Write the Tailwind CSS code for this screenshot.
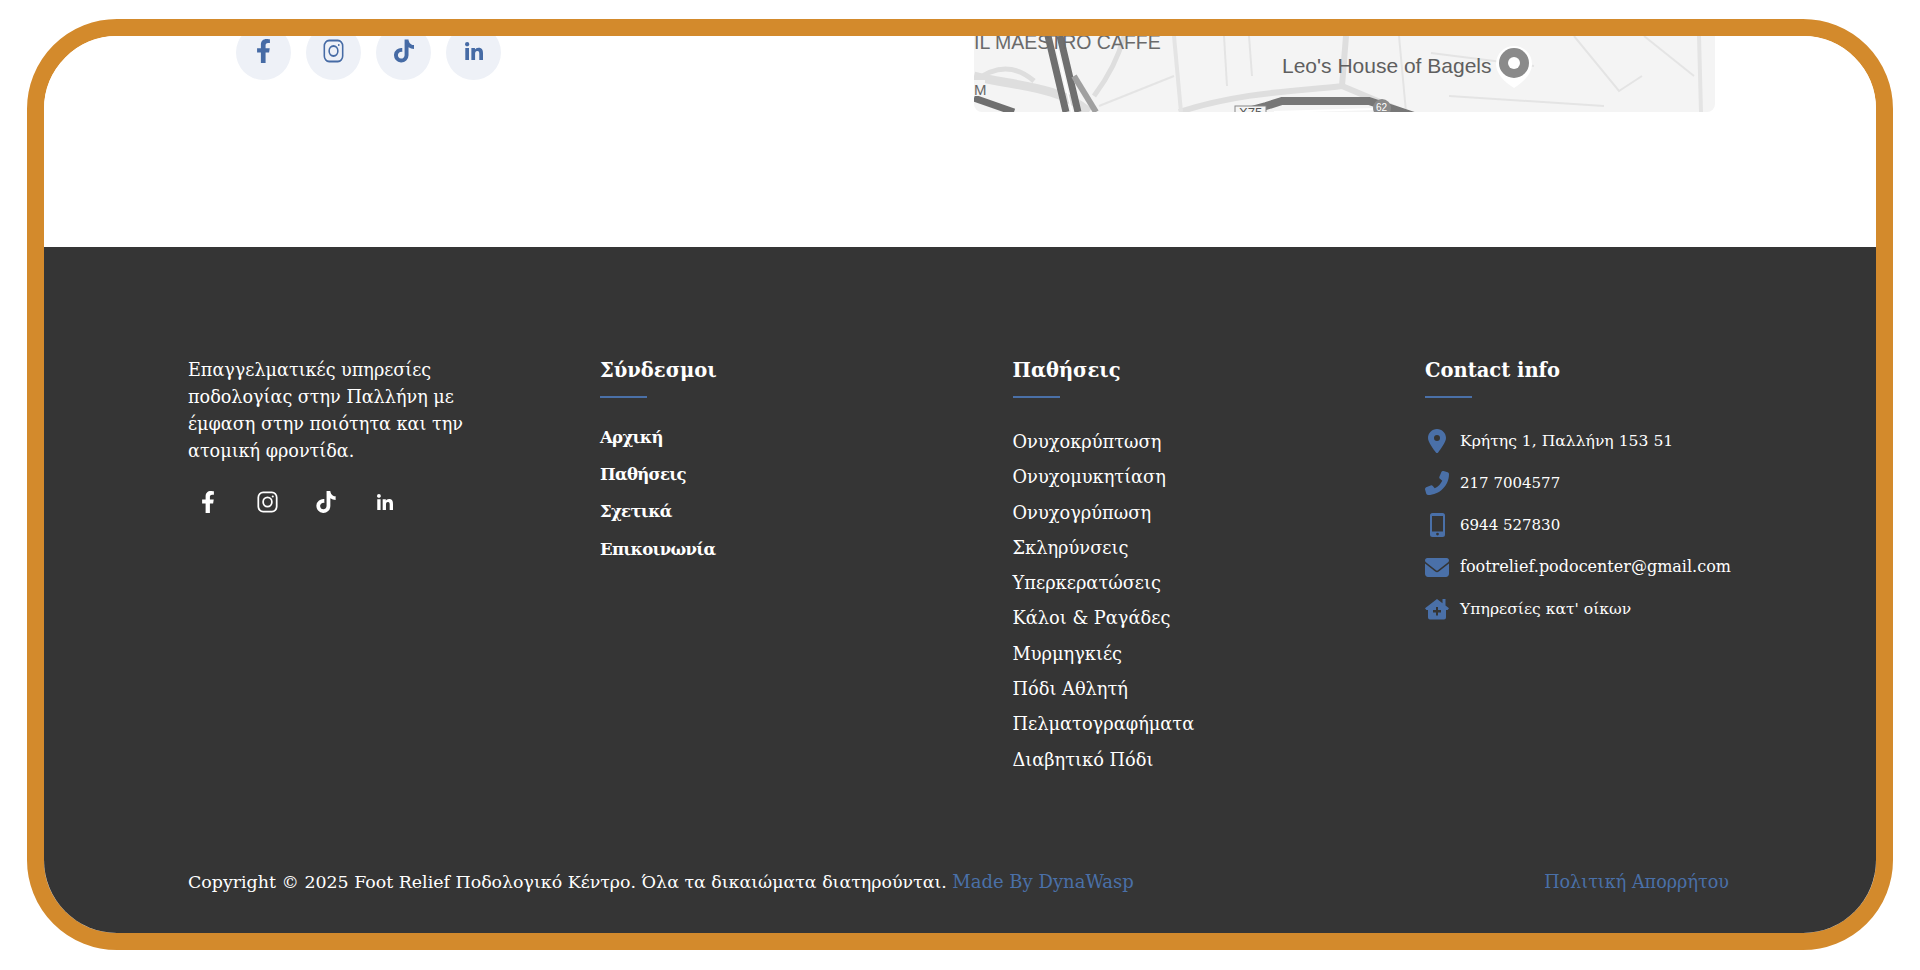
<!DOCTYPE html>
<html lang="el">
<head>
    <meta charset="UTF-8">
    <meta name="viewport" content="width=device-width, initial-scale=1.0">
    <title>Foot Relief</title>
    <script src="https://cdn.jsdelivr.net/npm/@tailwindcss/browser@4"></script>
</head>
<body class="bg-white h-[970px] overflow-hidden pt-[19px] px-[27px] font-['DejaVu_Serif',serif]">
    <div class="h-[931px] border-[17px] border-[#d38a2c] rounded-[90px] overflow-hidden flex flex-col">
        <!-- top section -->
        <div class="h-[211px] shrink-0 bg-white flex justify-between items-start pl-[192px] pr-[161px]">
            <div class="flex gap-[15px] -mt-[11px] text-[#466ba5]">
                <a class="w-[55px] h-[55px] pb-[3px] rounded-full bg-[#eef1f7] flex items-center justify-center">
                    <svg class="h-[24px] w-[15px]" viewBox="0 0 320 512" fill="currentColor"><path d="M279.14 288l14.22-92.66h-88.91v-60.13c0-25.35 12.42-50.06 52.24-50.06h40.42V6.26S260.43 0 225.36 0c-73.22 0-121.08 44.38-121.08 124.72v70.62H22.89V288h81.39v224h100.17V288z"/></svg>
                </a>
                <a class="w-[55px] h-[55px] pb-[3px] rounded-full bg-[#eef1f7] flex items-center justify-center">
                    <svg class="w-[21px] h-[24px]" viewBox="0 0 24 24" fill="none" stroke="currentColor" stroke-width="1.8" preserveAspectRatio="none"><rect x="1.5" y="1.5" width="21" height="21" rx="5.5"/><circle cx="12" cy="12" r="5"/><circle cx="18" cy="6" r="1" fill="currentColor" stroke="none"/></svg>
                </a>
                <a class="w-[55px] h-[55px] pb-[3px] rounded-full bg-[#eef1f7] flex items-center justify-center">
                    <svg class="w-[20px] h-[24px]" viewBox="0 0 448 512" fill="currentColor"><path d="M448,209.91a210.06,210.06,0,0,1-122.77-39.25V349.38A162.55,162.55,0,1,1,185,188.31V278.2a74.62,74.62,0,1,0,52.23,71.18V0l88,0a121.18,121.18,0,0,0,1.86,22.17h0A122.18,122.18,0,0,0,381,102.39a121.43,121.43,0,0,0,67,20.14Z"/></svg>
                </a>
                <a class="w-[55px] h-[55px] pb-[4px] rounded-full bg-[#eef1f7] flex items-center justify-center">
                    <svg class="w-[18px] h-[18px]" viewBox="0 0 448 448" fill="currentColor"><path d="M100.28 448H7.4V148.9h92.88zM53.79 108.1C24.09 108.1 0 83.5 0 53.8a53.79 53.79 0 0 1 107.58 0c0 29.7-24.1 54.3-53.79 54.3zM447.9 448h-92.68V302.4c0-34.7-.7-79.2-48.29-79.2-48.29 0-55.69 37.7-55.69 76.7V448h-92.78V148.9h89.08v40.8h1.3c12.4-23.5 42.69-48.3 87.88-48.3 94 0 111.28 61.9 111.28 142.3V448z"/></svg>
                </a>
            </div>
            <!-- map -->
            <div class="w-[741px] h-[76px] rounded-b-lg overflow-hidden bg-[#f4f4f4]">
                <svg class="w-full h-full" viewBox="0 0 741 76" font-family="'Liberation Sans',sans-serif">
                    <g fill="none" stroke="#dedede" stroke-width="5">
                        <path d="M0 46 C25 26 45 32 60 45"/>
                        <path d="M0 40 C40 50 85 50 115 76" stroke-width="9"/>
                        <path d="M120 60 C135 40 145 20 150 0"/>
                        <path d="M205 76 C270 55 330 55 368 50 L372 0" stroke-width="6"/>
                        <path d="M368 50 L430 76" stroke-width="6"/>
                    </g>
                    <g fill="none" stroke="#e4e4e4" stroke-width="2">
                        <path d="M200 0 L207 76" stroke-width="4"/>
                        <path d="M250 0 L253 50"/>
                        <path d="M275 0 L278 40"/>
                        <path d="M425 0 L432 76"/>
                        <path d="M457 17 L560 30"/>
                        <path d="M600 0 L645 55 L668 40"/>
                        <path d="M725 0 L727 76" stroke-width="4"/>
                        <path d="M670 0 L720 40"/>
                        <path d="M475 60 L630 70"/>
                        <path d="M200 40 L125 70"/>
                    </g>
                    <path d="M74 0 L92 76 M86 0 L104 76" stroke="#6f6f6f" stroke-width="7" fill="none"/>
                    <path d="M80 0 L98 76" stroke="#fff" stroke-width="1.5" fill="none"/>
                    <path d="M100 40 L122 76" stroke="#a0a0a0" stroke-width="6" fill="none"/>
                    <path d="M0 62 L40 76" stroke="#6f6f6f" stroke-width="7" fill="none"/>
                    <path d="M270 76 L292 70 L308 65 L395 65 L440 80" stroke="#777" stroke-width="8" fill="none"/>
                    <path d="M300 76 L400 73" stroke="#fff" stroke-width="2" fill="none"/>
                    <rect x="0" y="44" width="11" height="16" fill="#f4f4f4"/>
                    <text x="0" y="59" font-size="15" fill="#666">M</text>
                    <rect x="261" y="70" width="31" height="12" fill="#f5f5f5" stroke="#888"/>
                    <text x="265" y="81" font-size="13" fill="#555">Χ75</text>
                    <circle cx="408" cy="72" r="9" fill="#8a8a8a"/>
                    <text x="402" y="75" font-size="10" fill="#fff">62</text>
                    <text x="0" y="13" font-size="19.5" fill="#6a6a6a">IL MAESTRO CAFFE</text>
                    <text x="308" y="37" font-size="21" fill="#5f5f5f">Leo's House of Bagels</text>
                    <path d="M540 52 C530 46 522 37 522 28 A18 18 0 0 1 558 28 C558 37 550 46 540 52Z" fill="#fff"/>
                    <circle cx="540" cy="27" r="15" fill="#8a8a8a"/>
                    <circle cx="540" cy="27" r="6" fill="#fff"/>
                </svg>
            </div>
        </div>

        <!-- footer -->
        <footer class="flex-1 bg-[#353535] text-white pl-[144px] pr-[147px] flex flex-col">
            <div class="grid grid-cols-[308px_308.5px_308.5px_1fr] gap-x-[104px] pt-[110px]">
                <div>
                    <p class="text-[17.6px] leading-[27px]">Επαγγελματικές υπηρεσίες ποδολογίας στην Παλλήνη με έμφαση στην ποιότητα και την ατομική φροντίδα.</p>
                    <div class="flex items-center gap-[35px] mt-[26px] pl-[8px]">
                        <span class="w-[24px] flex justify-center"><svg class="w-[14px] h-[22px]" viewBox="0 0 320 512" fill="#fff"><path d="M279.14 288l14.22-92.66h-88.91v-60.13c0-25.35 12.42-50.06 52.24-50.06h40.42V6.26S260.43 0 225.36 0c-73.22 0-121.08 44.38-121.08 124.72v70.62H22.89V288h81.39v224h100.17V288z"/></svg></span>
                        <span class="w-[24px] flex justify-center"><svg class="w-[21px] h-[22px]" viewBox="0 0 24 24" fill="none" stroke="#fff" stroke-width="2" preserveAspectRatio="none"><rect x="1.5" y="1.5" width="21" height="21" rx="5.5"/><circle cx="12" cy="12" r="5"/><circle cx="18" cy="6" r="1.2" fill="#fff" stroke="none"/></svg></span>
                        <span class="w-[24px] flex justify-center"><svg class="w-[20px] h-[22px]" viewBox="0 0 448 512" fill="#fff"><path d="M448,209.91a210.06,210.06,0,0,1-122.77-39.25V349.38A162.55,162.55,0,1,1,185,188.31V278.2a74.62,74.62,0,1,0,52.23,71.18V0l88,0a121.18,121.18,0,0,0,1.86,22.17h0A122.18,122.18,0,0,0,381,102.39a121.43,121.43,0,0,0,67,20.14Z"/></svg></span>
                        <span class="w-[24px] flex justify-center"><svg class="w-[16px] h-[16px]" viewBox="0 0 448 448" fill="#fff"><path d="M100.28 448H7.4V148.9h92.88zM53.79 108.1C24.09 108.1 0 83.5 0 53.8a53.79 53.79 0 0 1 107.58 0c0 29.7-24.1 54.3-53.79 54.3zM447.9 448h-92.68V302.4c0-34.7-.7-79.2-48.29-79.2-48.29 0-55.69 37.7-55.69 76.7V448h-92.78V148.9h89.08v40.8h1.3c12.4-23.5 42.69-48.3 87.88-48.3 94 0 111.28 61.9 111.28 142.3V448z"/></svg></span>
                    </div>
                </div>

                <div>
                    <h3 class="text-[19.5px] leading-[28px] font-bold">Σύνδεσμοι</h3>
                    <div class="w-[47px] h-[2px] bg-[#4a70a8] mt-[11px]"></div>
                    <ul class="mt-[28px] space-y-[13px] text-[16.5px] tracking-[-0.7px] leading-[24.2px] font-bold">
                        <li>Αρχική</li>
                        <li>Παθήσεις</li>
                        <li>Σχετικά</li>
                        <li>Επικοινωνία</li>
                    </ul>
                </div>

                <div>
                    <h3 class="text-[19.5px] leading-[28px] font-bold">Παθήσεις</h3>
                    <div class="w-[47px] h-[2px] bg-[#4a70a8] mt-[11px]"></div>
                    <ul class="mt-[26px] text-[17.8px] leading-[35.3px]">
                        <li>Ονυχοκρύπτωση</li>
                        <li>Ονυχομυκητίαση</li>
                        <li>Ονυχογρύπωση</li>
                        <li>Σκληρύνσεις</li>
                        <li>Υπερκερατώσεις</li>
                        <li>Κάλοι &amp; Ραγάδες</li>
                        <li>Μυρμηγκιές</li>
                        <li>Πόδι Αθλητή</li>
                        <li>Πελματογραφήματα</li>
                        <li>Διαβητικό Πόδι</li>
                    </ul>
                </div>

                <div>
                    <h3 class="text-[19.5px] leading-[28px] font-bold">Contact info</h3>
                    <div class="w-[47px] h-[2px] bg-[#4a70a8] mt-[11px]"></div>
                    <ul class="mt-[31px] text-[15.6px] leading-[22px] space-y-[18px]">
                        <li class="flex items-center gap-[11px] h-[24px]">
                            <span class="w-[24px] flex justify-center"><svg class="w-[18px] h-[24px]" viewBox="0 0 384 512" fill="#4a70a8"><path d="M215.7 499.2C267 435 384 279.4 384 192C384 86 298 0 192 0S0 86 0 192c0 87.4 117 243 168.3 307.2c12.3 15.3 35.1 15.3 47.4 0zM192 128a64 64 0 1 1 0 128 64 64 0 1 1 0-128z"/></svg></span>
                            Κρήτης 1, Παλλήνη 153 51
                        </li>
                        <li class="flex items-center gap-[11px] h-[24px] text-[15px]">
                            <span class="w-[24px] flex justify-center"><svg class="w-[24px] h-[24px] -scale-x-100" viewBox="0 0 512 512" fill="#4a70a8"><path d="M164.9 24.6c-7.7-18.6-28-28.5-47.4-23.2l-88 24C12.1 30.2 0 46 0 64C0 311.4 200.6 512 448 512c18 0 33.8-12.1 38.6-29.5l24-88c5.3-19.4-4.6-39.7-23.2-47.4l-96-40c-16.3-6.8-35.2-2.1-46.3 11.6L304.7 368C234.3 334.7 177.3 277.7 144 207.3L193.3 167c13.7-11.2 18.4-30 11.6-46.3l-40-96z"/></svg></span>
                            217 7004577
                        </li>
                        <li class="flex items-center gap-[11px] h-[24px] text-[15px]">
                            <span class="w-[24px] flex justify-center"><svg class="w-[15px] h-[24px]" viewBox="0 0 15 24" fill="#4a70a8"><path fill-rule="evenodd" d="M2.5 0h10A2.5 2.5 0 0 1 15 2.5v19a2.5 2.5 0 0 1-2.5 2.5h-10A2.5 2.5 0 0 1 0 21.5v-19A2.5 2.5 0 0 1 2.5 0zM2 3v15.5h11V3zM7.5 19.7a1.4 1.4 0 1 0 0 2.8 1.4 1.4 0 0 0 0-2.8z"/></svg></span>
                            6944 527830
                        </li>
                        <li class="flex items-center gap-[11px] h-[24px] text-[16px]">
                            <span class="w-[24px] flex justify-center"><svg class="w-[24px] h-[19px]" viewBox="0 64 512 384" preserveAspectRatio="none" fill="#4a70a8"><path d="M48 64C21.5 64 0 85.5 0 112c0 15.1 7.1 29.3 19.2 38.4L236.8 313.6c11.4 8.5 27 8.5 38.4 0L492.8 150.4c12.1-9.1 19.2-23.3 19.2-38.4c0-26.5-21.5-48-48-48H48zM0 176V384c0 35.3 28.7 64 64 64H448c35.3 0 64-28.7 64-64V176L294.4 339.2c-22.8 17.1-54 17.1-76.8 0L0 176z"/></svg></span>
                            footrelief.podocenter@gmail.com
                        </li>
                        <li class="flex items-center gap-[11px] h-[24px]">
                            <span class="w-[24px] flex justify-center"><svg class="w-[24px] h-[22px]" viewBox="0 0 24 22" fill="#4a70a8"><path fill-rule="evenodd" d="M12 1 17.5 5.2V1H20.5V7.5L24 10.3 22.6 12H21V19.5A2 2 0 0 1 19 21.5H5A2 2 0 0 1 3 19.5V12H1.4L0 10.3zM11 9V12H8V14.5H11V17.5H13V14.5H16V12H13V9z"/></svg></span>
                            Υπηρεσίες κατ' οίκων
                        </li>
                    </ul>
                </div>
            </div>

            <div class="mt-auto pb-[39px] flex justify-between items-center text-[17.4px] leading-[24px]">
                <p>Copyright © 2025 Foot Relief Ποδολογικό Κέντρο. Όλα τα δικαιώματα διατηρούνται. <a class="text-[#4a70a8] text-[18px]">Made By DynaWasp</a></p>
                <a class="text-[#4a70a8] text-[17.6px]">Πολιτική Απορρήτου</a>
            </div>
        </footer>
    </div>
</body>
</html>
